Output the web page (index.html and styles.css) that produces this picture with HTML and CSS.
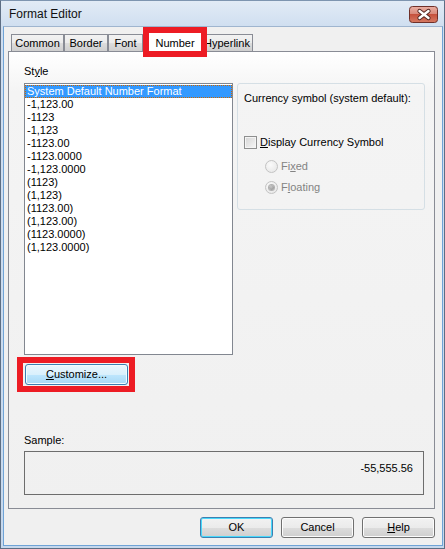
FILE: index.html
```html
<!DOCTYPE html>
<html>
<head>
<meta charset="utf-8">
<title>Format Editor</title>
<link rel="stylesheet" href="styles.css">
</head>
<body>
<div class="window">
  <div class="titlebar">
    <span class="title">Format Editor</span>
    <span class="close">
      <svg width="29" height="17" viewBox="0 0 29 17">
        <defs>
          <linearGradient id="cg" x1="0" y1="0" x2="0" y2="1">
            <stop offset="0" stop-color="#eab0a4"/>
            <stop offset="0.45" stop-color="#d98b7c"/>
            <stop offset="0.5" stop-color="#c6523d"/>
            <stop offset="1" stop-color="#d67a63"/>
          </linearGradient>
        </defs>
        <rect x="0.5" y="0.5" width="28" height="16" rx="3" fill="url(#cg)" stroke="#6f3029"/>
        <path d="M10.5 5 L19.5 12 M19.5 5 L10.5 12" stroke="#4f231e" stroke-width="4.2" stroke-linecap="round"/>
        <path d="M10.5 5 L19.5 12 M19.5 5 L10.5 12" stroke="#ffffff" stroke-width="2.4" stroke-linecap="round"/>
      </svg>
    </span>
  </div>
  <div class="client">
    <div class="tabs">
      <div class="tab tab-common">Common</div>
      <div class="tab tab-border">Border</div>
      <div class="tab tab-font">Font</div>
      <div class="tab tab-number active">Number<span class="mark mark-tab"></span></div>
      <div class="tab tab-hyperlink">Hyperlink</div>
    </div>
    <div class="panel">
      <div class="label style-label">St<u>y</u>le</div>
      <div class="row">
        <div class="listbox">
          <div class="item selected">System Default Number Format</div>
          <div class="item">-1,123.00</div>
          <div class="item">-1123</div>
          <div class="item">-1,123</div>
          <div class="item">-1123.00</div>
          <div class="item">-1123.0000</div>
          <div class="item">-1,123.0000</div>
          <div class="item">(1123)</div>
          <div class="item">(1,123)</div>
          <div class="item">(1123.00)</div>
          <div class="item">(1,123.00)</div>
          <div class="item">(1123.0000)</div>
          <div class="item">(1,123.0000)</div>
        </div>
        <div class="group">
          <div class="group-title">Currency symbol (system default):</div>
          <div class="check"><span class="box"></span><span><u>D</u>isplay Currency Symbol</span></div>
          <div class="radio radio-fixed"><span class="circle"></span><span>Fi<u>x</u>ed</span></div>
          <div class="radio radio-floating"><span class="circle checked"></span><span>F<u>l</u>oating</span></div>
        </div>
      </div>
      <div class="customize-wrap">
        <button class="btn hot customize"><u>C</u>ustomize...</button>
        <span class="mark mark-btn"></span>
      </div>
      <div class="label sample-label">Sample:</div>
      <div class="sample">-55,555.56</div>
    </div>
    <div class="footer">
      <button class="btn default">OK</button>
      <button class="btn">Cancel</button>
      <button class="btn"><u>H</u>elp</button>
    </div>
  </div>
</div>
</body>
</html>
```
FILE: styles.css
```css
* { box-sizing: border-box; }
html, body { margin: 0; padding: 0; }
body {
  width: 445px;
  height: 549px;
  overflow: hidden;
  font-family: "Liberation Sans", Arial, sans-serif;
  font-size: 11px;
  color: #000;
  background: #c9daee;
}
u { text-decoration: underline; text-underline-offset: 1px; }

.window {
  width: 445px;
  height: 549px;
  border: 1px solid #5d6e84;
  border-top-color: #7e95b0;
  background: linear-gradient(#e2ebf6, #cfdef0 26px, #c6d8ed);
  padding: 0 1px 2px 2px;
  display: flex;
  flex-direction: column;
}

.titlebar {
  height: 25px;
  display: flex;
  align-items: center;
  justify-content: space-between;
  padding: 0 5px 0 6px;
}
.title {
  font-size: 12px;
  color: #111;
  padding-top: 1px;
}
.close {
  display: flex;
  margin-top: 1px;
}

.client {
  flex: 1;
  background: #f0f0f0;
  border: 1px solid #6fa3d6;
  border-top-color: #9fb5cf;
  display: flex;
  flex-direction: column;
}

/* tabs */
.tabs {
  display: flex;
  align-items: flex-end;
  margin: 5px 0 0 7px;
  position: relative;
  z-index: 2;
}
.tab {
  position: relative;
  height: 17px;
  border: 1px solid #898c95;
  border-bottom: none;
  background: linear-gradient(#f2f2f2, #ebebeb 50%, #dddddd 51%, #cfcfcf);
  text-align: center;
  line-height: 15px;
  padding-top: 1px;
}
.tab-common { width: 53px; }
.tab-border { width: 44px; }
.tab-font { width: 35px; }
.tab-number { width: 54px; margin-left: 5px; }
.tab-hyperlink { width: 52px; margin-left: -1px; z-index: -1; }
.tab.active {
  height: 21px;
  margin-bottom: -2px;
  background: #fff;
  line-height: 16px;
  padding-top: 2px;
  z-index: 1;
}

.mark {
  position: absolute;
  border: 6px solid #ed1c24;
  pointer-events: none;
}
.mark-tab { left: -6px; right: -6px; top: -6px; bottom: -4px; }
.mark-btn { left: -8px; right: -7px; top: -7px; bottom: -7px; }

/* panel */
.panel {
  position: relative;
  z-index: 1;
  height: 458px;
  margin: 0 7px 0 4px;
  border: 1px solid #898c95;
  background: linear-gradient(#ffffff, #f4f4f4 40px, #f0f0f0);
  padding: 13px 9px 0 15px;
  display: flex;
  flex-direction: column;
  align-items: flex-start;
}
.label { line-height: 13px; height: 13px; }
.style-label { margin-bottom: 5px; }

.row {
  display: flex;
  gap: 4px;
  align-items: flex-start;
}
.listbox {
  width: 209px;
  height: 272px;
  border: 1px solid #828790;
  background: #fff;
  padding: 1px 0 0 0;
}
.item {
  height: 13px;
  line-height: 13px;
  padding-left: 2px;
  white-space: nowrap;
}
.item.selected {
  background: #3399ff;
  color: #fff;
  outline: 1px dotted #cc6600;
  outline-offset: -1px;
}

.group {
  width: 188px;
  height: 127px;
  border: 1px solid #d5dfe5;
  border-radius: 3px;
  padding: 8px 0 0 6px;
  display: flex;
  flex-direction: column;
}
.group-title { line-height: 13px; }
.check {
  display: flex;
  align-items: center;
  gap: 3px;
  margin-top: 31px;
  height: 13px;
  line-height: 13px;
}
.box {
  width: 13px;
  height: 13px;
  border: 1px solid #8e8f8f;
  background: linear-gradient(135deg, #d4d4d4, #f7f7f7);
  box-shadow: inset 0 0 0 1px #f4f4f4;
}
.radio {
  display: flex;
  align-items: center;
  gap: 3px;
  margin-left: 21px;
  height: 13px;
  line-height: 13px;
  color: #838383;
}
.radio-fixed { margin-top: 11px; }
.radio-floating { margin-top: 8px; }
.circle {
  width: 13px;
  height: 13px;
  border-radius: 50%;
  border: 1px solid #c3c3c3;
  background: radial-gradient(circle at 40% 35%, #fafafa, #e4e4e4);
  display: flex;
  align-items: center;
  justify-content: center;
}
.circle.checked::after {
  content: "";
  width: 5px;
  height: 5px;
  border-radius: 50%;
  background: radial-gradient(circle at 40% 35%, #c8c8c8, #8a8a8a);
  box-shadow: 0 0 0 1px #b0b0b0;
}

/* buttons */
.btn {
  font-family: inherit;
  font-size: 11px;
  color: #000;
  width: 73px;
  height: 21px;
  padding: 0;
  border: 1px solid #707070;
  border-radius: 3px;
  background: linear-gradient(#f2f2f2, #ebebeb 50%, #dddddd 51%, #cfcfcf);
  box-shadow: inset 0 0 0 1px #fcfcfc;
  line-height: 17px;
}
.btn.hot {
  border-color: #3c7fb1;
  background: linear-gradient(#eaf6fd, #d9f0fc 50%, #bee6fd 51%, #a7d9f5);
  box-shadow: inset 0 0 0 1px #f4fbfe;
}
.btn.default {
  border-color: #3c7fb1;
  box-shadow: inset 0 0 0 1px #48d8fb;
}

.customize-wrap {
  position: relative;
  margin: 9px 0 0 1px;
  display: flex;
}
.customize { width: 103px; }

.sample-label { margin-top: 49px; }
.sample {
  margin-top: 4px;
  width: 400px;
  height: 44px;
  border: 1px solid #6d6d6d;
  text-align: right;
  padding: 10px 10px 0 0;
  line-height: 13px;
}

.footer {
  display: flex;
  justify-content: flex-end;
  gap: 8px;
  margin: 8px 7px 0 0;
}
```
